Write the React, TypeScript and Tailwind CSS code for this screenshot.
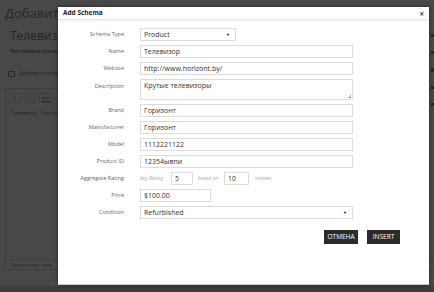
import React from "react";

const labelCls = "w-[66px] shrink-0 text-right text-[5.5px] text-[#666] leading-none";
const inputCls =
  "h-[13px] border border-[#dcdcdc] bg-white px-[3px] flex items-center text-[7px] text-[#333] leading-none";

function Row({ label, children, top }: { label: string; children: React.ReactNode; top?: boolean }) {
  return (
    <div className={`flex ${top ? "items-start" : "items-center"}`}>
      <div className={`${labelCls} ${top ? "pt-[5px]" : ""}`}>{label}</div>
      <div className="ml-[16px] flex items-center">{children}</div>
    </div>
  );
}

export default function App() {
  return (
    <div
      className="relative w-[434px] h-[292px] overflow-hidden bg-[#484848]"
      style={{ fontFamily: '"Open Sans", "Liberation Sans", sans-serif' }}
    >
      {/* page behind the overlay */}
      <div className="flex flex-col pl-[5px] text-[#262626]">
        <div className="h-[26px] flex items-center text-[13px] leading-none">Добавить</div>
        <div className="h-[20px] flex items-center pl-[5px] text-[12px] leading-none">Телевизор</div>
        <div className="mt-[3px] pl-[5px] text-[5px] font-bold leading-none">Постоянная ссылка</div>
        <div className="mt-[17px] pl-[3px] flex items-center gap-[4px] text-[5.5px] leading-none">
          <span className="w-[7px] h-[6px] border border-[#262626] rounded-[1px]" />
          <span>Добавить медиафайл</span>
        </div>
        <div className="mt-[11px] border-l border-t border-[#3e3e3e] h-[172px] flex flex-col">
          <div className="flex gap-[4px] pl-[3px] pt-[4px] text-[5px] leading-none">
            <span className="w-[12px] h-[10px] border border-[#3e3e3e] flex items-center justify-center">b</span>
            <span className="w-[10px] h-[10px] border border-[#3e3e3e] flex items-center justify-center">i</span>
            <span className="w-[13px] h-[10px] border border-[#3e3e3e] flex items-center justify-center underline">link</span>
          </div>
          <div className="mt-[8px] pl-[5px] text-[5px] leading-none">Телевизор "Горизонт"</div>
        </div>
        <div className="h-[10px] border border-[#3e3e3e] bg-[#4a4a4a] flex items-center pl-[5px] text-[5px] leading-none">
          Количество слов
        </div>
      </div>
      <div className="absolute right-0 top-0 h-full w-[5px] flex flex-col items-end gap-[14px] pt-[34px]">
        <span className="w-[3px] h-[3px] bg-[#262626]" />
        <span className="w-[3px] h-[3px] bg-[#262626]" />
        <span className="w-[3px] h-[4px] bg-[#262626]" />
        <span className="w-[3px] h-[3px] bg-[#262626]" />
        <span className="w-[3px] h-[3px] bg-[#262626]" />
      </div>
      <div className="absolute left-0 bottom-0 w-full h-[6px] bg-[#3d3d3d]" />

      {/* dialog */}
      <div className="absolute left-[58px] top-[7px] w-[371px] h-[278px] bg-white border-b border-[#ccc] shadow-[0_0_4px_rgba(0,0,0,0.5)] flex flex-col">
        <div className="relative h-[13px] shrink-0 flex items-center px-[5px] border-b border-[#e6e6e6] shadow-[0_1px_2px_rgba(0,0,0,0.06)]">
          <span className="text-[6.5px] font-bold text-[#222] leading-none">Add Schema</span>
          <span className="absolute right-[5px] top-[3px] text-[8px] font-bold text-[#444] leading-none">×</span>
        </div>

        <div className="mt-[8px] flex flex-col gap-[4px]">
          <Row label="Schema Type">
            <div className={`${inputCls} w-[96px] justify-between bg-[#fafafa]`}>
              <span>Product</span>
              <span className="text-[4px] text-black mr-[2px]">▼</span>
            </div>
          </Row>
          <Row label="Name">
            <div className={`${inputCls} w-[213px]`}>Телевизор</div>
          </Row>
          <Row label="Website">
            <div className={`${inputCls} w-[213px]`}>http://www.horizont.by/</div>
          </Row>
          <Row label="Description" top>
            <div className="relative h-[21px] w-[213px] border border-[#dcdcdc] px-[3px] pt-[2px] text-[7px] text-[#333] leading-none">
              Крутые телевизоры
              <span className="absolute right-[1px] bottom-[1px] w-[3px] h-[3px] border-r border-b border-[#999]" />
            </div>
          </Row>
          <Row label="Brand">
            <div className={`${inputCls} w-[213px]`}>Горизонт</div>
          </Row>
          <Row label="Manufacturer">
            <div className={`${inputCls} w-[213px]`}>Горизонт</div>
          </Row>
          <Row label="Model">
            <div className={`${inputCls} w-[213px]`}>1112221122</div>
          </Row>
          <Row label="Product ID">
            <div className={`${inputCls} w-[213px]`}>12354ывпи</div>
          </Row>
          <Row label="Aggregate Rating">
            <span className="text-[5px] italic text-[#aaa] leading-none w-[31px]">Avg Rating</span>
            <div className={`${inputCls} w-[22px]`}>5</div>
            <span className="ml-[5px] text-[5px] italic text-[#aaa] leading-none w-[26px]">based on</span>
            <div className={`${inputCls} w-[25px]`}>10</div>
            <span className="ml-[6px] text-[5px] italic text-[#aaa] leading-none">reviews</span>
          </Row>
          <Row label="Price">
            <div className={`${inputCls} w-[71px]`}>$100.00</div>
          </Row>
          <Row label="Condition">
            <div className={`${inputCls} w-[213px] justify-between bg-[#fafafa]`}>
              <span>Refurbished</span>
              <span className="text-[4px] text-black mr-[2px]">▼</span>
            </div>
          </Row>
        </div>

        <div className="mt-[11px] flex justify-end gap-[9px] pr-[29px]">
          <button className="h-[14px] w-[34px] bg-[#2b2b2b] text-white text-[6.5px] leading-none flex items-center justify-center">
            ОТМЕНА
          </button>
          <button className="h-[14px] w-[33px] bg-[#2b2b2b] text-white text-[6.5px] leading-none flex items-center justify-center">
            INSERT
          </button>
        </div>
      </div>
    </div>
  );
}
